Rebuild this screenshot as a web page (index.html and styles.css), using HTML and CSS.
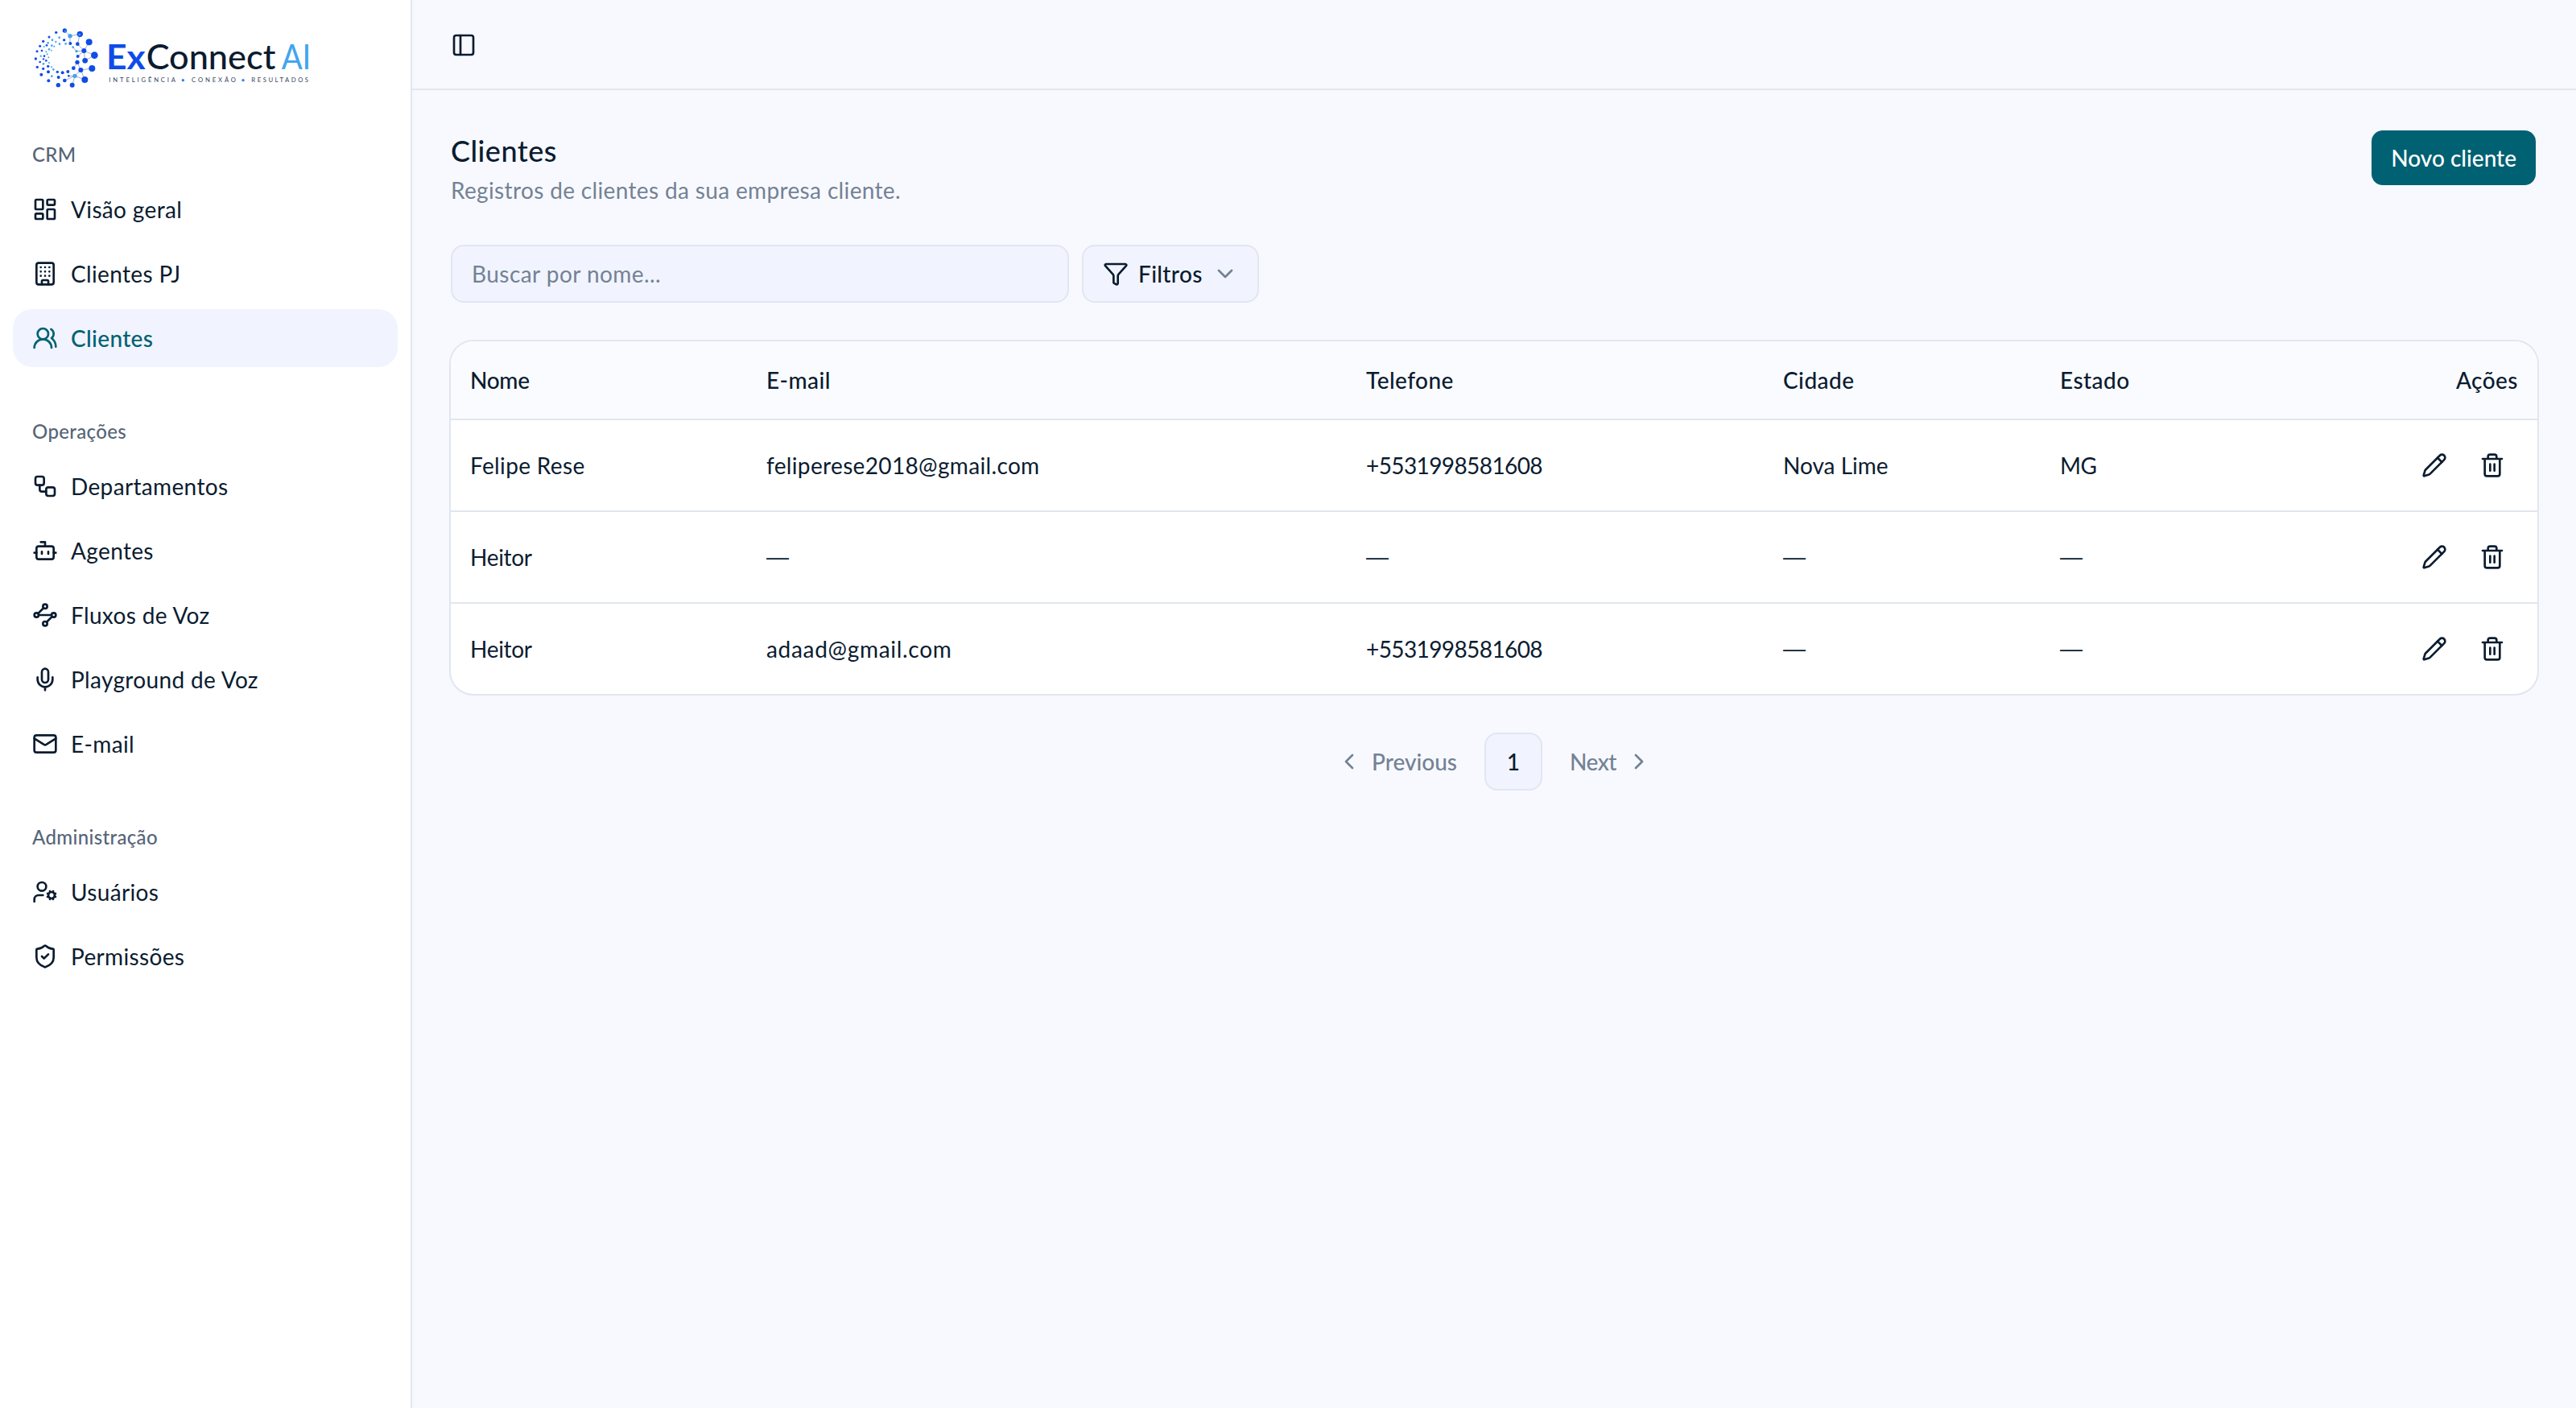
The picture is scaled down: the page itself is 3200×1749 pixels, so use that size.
FILE: index.html
```html
<!DOCTYPE html>
<html lang="pt-BR">
<head>
    <meta charset="UTF-8">
    <meta name="viewport" content="width=device-width, initial-scale=1.0">
    <title>ExConnect AI - Clientes</title>
    <link rel="stylesheet" href="styles.css">
</head>
<body>
    <svg class="sprite">
        <symbol id="pencil" viewBox="0 0 24 24"><path d="M21.174 6.812a1 1 0 0 0-3.986-3.987L3.842 16.174a2 2 0 0 0-.5.83l-1.321 4.352a.5.5 0 0 0 .623.622l4.353-1.32a2 2 0 0 0 .83-.497z"/><path d="m15 5 4 4"/></symbol>
        <symbol id="trash" viewBox="0 0 24 24"><path d="M10 11v6M14 11v6M19 6v14a2 2 0 0 1-2 2H7a2 2 0 0 1-2-2V6M3 6h18M8 6V4a2 2 0 0 1 2-2h4a2 2 0 0 1 2 2v2"/></symbol>
    </svg>

    <aside class="sidebar">
        <a class="logo" href="#">
            <svg viewBox="0 0 1200 360" width="400" height="120">
                <g transform="translate(48 60)">
                    <path class="net" d="M133 24L153 44L190 37L181 74M153 44V72M181 74L205 99L224 67M205 99L244 116L209 136L205 99L177 101L164 86M205 99L182 120M180 142L166 164M180 142L193 171L235 165M193 171L208 207L171 193L193 171M171 193L133 210M171 193L161 227M171 193L148 193"/>
                    <g class="dark">
                        <circle cx="133" cy="24" r="8"/><circle cx="190" cy="37" r="11"/><circle cx="224" cy="67" r="12"/><circle cx="244" cy="116" r="13"/><circle cx="209" cy="136" r="10"/><circle cx="205" cy="99" r="9"/><circle cx="154" cy="72" r="6"/><circle cx="181" cy="74" r="7"/><circle cx="182" cy="120" r="6"/><circle cx="180" cy="142" r="8"/><circle cx="166" cy="164" r="7"/><circle cx="193" cy="171" r="9"/><circle cx="235" cy="165" r="12"/><circle cx="208" cy="207" r="12"/><circle cx="161" cy="227" r="9"/><circle cx="133" cy="210" r="7"/><circle cx="109" cy="227" r="8"/><circle cx="73" cy="211" r="6"/><circle cx="46" cy="188" r="6"/><circle cx="31" cy="160" r="5"/><circle cx="25" cy="129" r="5"/><circle cx="30" cy="101" r="4.5"/><circle cx="41" cy="82" r="4.5"/><circle cx="53" cy="64" r="5"/><circle cx="75" cy="48" r="4.5"/><circle cx="101" cy="31" r="5"/><circle cx="131" cy="59" r="5"/><circle cx="72" cy="178" r="6"/><circle cx="53" cy="166" r="5"/><circle cx="41" cy="141" r="4"/><circle cx="48" cy="99" r="4"/><circle cx="125" cy="181" r="6"/><circle cx="145" cy="177" r="6"/><circle cx="106" cy="178" r="5"/><circle cx="110" cy="198" r="6"/><circle cx="148" cy="193" r="4"/><circle cx="71" cy="157" r="5"/><circle cx="57" cy="119" r="4"/><circle cx="54" cy="130" r="3.5"/><circle cx="66" cy="79" r="4"/><circle cx="64" cy="136" r="4"/>
                    </g>
                    <g class="light">
                        <circle cx="153" cy="44" r="8"/><circle cx="171" cy="193" r="8"/><circle cx="177" cy="101" r="5"/><circle cx="164" cy="86" r="4"/><circle cx="188" cy="39" r="4"/><circle cx="135" cy="26" r="3"/><circle cx="113" cy="50" r="4"/><circle cx="87" cy="59" r="4"/><circle cx="100" cy="66" r="3.5"/><circle cx="114" cy="74" r="4"/><circle cx="137" cy="73" r="4"/><circle cx="71" cy="70" r="4"/><circle cx="85" cy="80" r="4"/><circle cx="94" cy="83" r="3"/><circle cx="56" cy="84" r="3"/><circle cx="64" cy="103" r="3"/><circle cx="75" cy="94" r="4"/><circle cx="68" cy="112" r="3"/><circle cx="44" cy="119" r="3.5"/><circle cx="73" cy="124" r="3"/><circle cx="54" cy="148" r="4"/><circle cx="75" cy="144" r="3"/><circle cx="84" cy="160" r="3"/><circle cx="91" cy="169" r="4"/><circle cx="85" cy="194" r="4"/><circle cx="84" cy="98" r="2.5"/>
                    </g>
                </g>
                <text class="brand brand-ex" x="336" y="227" textLength="146" lengthAdjust="spacingAndGlyphs">Ex</text>
                <text class="brand" x="485" y="227" textLength="482" lengthAdjust="spacingAndGlyphs">Connect</text>
                <text class="brand brand-ai" x="989" y="227" textLength="110" lengthAdjust="spacingAndGlyphs">AI</text>
                <text class="tagline" x="346" y="277" textLength="248">INTELIGÊNCIA</text>
                <text class="tagline" x="654" y="277" textLength="165">CONEXÃO</text>
                <text class="tagline" x="877" y="277" textLength="212">RESULTADOS</text>
                <circle class="sep" cx="622" cy="269" r="5"/>
                <circle class="sep" cx="846" cy="269" r="5"/>
            </svg>
        </a>

        <nav class="group">
            <div class="group-label">CRM</div>
            <a class="item"><svg class="icon" viewBox="0 0 24 24"><rect width="7" height="9" x="3" y="3" rx="1"/><rect width="7" height="5" x="14" y="3" rx="1"/><rect width="7" height="9" x="14" y="12" rx="1"/><rect width="7" height="5" x="3" y="16" rx="1"/></svg><span>Visão geral</span></a>
            <a class="item"><svg class="icon" viewBox="0 0 24 24"><rect width="16" height="20" x="4" y="2" rx="2"/><path d="M9 22v-3a1 1 0 0 1 1-1h4a1 1 0 0 1 1 1v3M8 6h.01M12 6h.01M16 6h.01M8 10h.01M12 10h.01M16 10h.01M8 14h.01M12 14h.01M16 14h.01"/></svg><span>Clientes PJ</span></a>
            <a class="item active"><svg class="icon" viewBox="0 0 24 24"><path d="M18 21a8 8 0 0 0-16 0"/><circle cx="10" cy="8" r="5"/><path d="M22 20c0-3.37-2-6.5-4-8a5 5 0 0 0-.45-8.3"/></svg><span>Clientes</span></a>
        </nav>

        <nav class="group">
            <div class="group-label">Operações</div>
            <a class="item"><svg class="icon" viewBox="0 0 24 24"><rect width="8" height="8" x="3" y="3" rx="2"/><path d="M7 11v4a2 2 0 0 0 2 2h4"/><rect width="8" height="8" x="13" y="13" rx="2"/></svg><span>Departamentos</span></a>
            <a class="item"><svg class="icon" viewBox="0 0 24 24"><path d="M12 8V4H8"/><rect width="16" height="12" x="4" y="8" rx="2"/><path d="M2 14h2M20 14h2M15 13v2M9 13v2"/></svg><span>Agentes</span></a>
            <a class="item"><svg class="icon" viewBox="0 0 24 24"><path d="m10.586 5.414-5.172 5.172M18.586 13.414l-5.172 5.172M6 12h12"/><circle cx="12" cy="20" r="2"/><circle cx="12" cy="4" r="2"/><circle cx="20" cy="12" r="2"/><circle cx="4" cy="12" r="2"/></svg><span>Fluxos de Voz</span></a>
            <a class="item"><svg class="icon" viewBox="0 0 24 24"><path d="M12 19v3M19 10v2a7 7 0 0 1-14 0v-2"/><rect x="9" y="2" width="6" height="13" rx="3"/></svg><span>Playground de Voz</span></a>
            <a class="item"><svg class="icon" viewBox="0 0 24 24"><path d="m22 7-8.991 5.727a2 2 0 0 1-2.009 0L2 7"/><rect x="2" y="4" width="20" height="16" rx="2"/></svg><span>E-mail</span></a>
        </nav>

        <nav class="group">
            <div class="group-label">Administração</div>
            <a class="item"><svg class="icon" viewBox="0 0 24 24"><path d="M10 15H6a4 4 0 0 0-4 4v2M14.305 16.53l.923-.382M15.228 13.852l-.923-.383M16.852 12.228l-.383-.923M16.852 17.772l-.383.924M19.148 12.228l.383-.923M19.53 18.696l-.382-.924M20.772 13.852l.924-.383M20.772 16.148l.924.383"/><circle cx="18" cy="15" r="3"/><circle cx="9" cy="7" r="4"/></svg><span>Usuários</span></a>
            <a class="item"><svg class="icon" viewBox="0 0 24 24"><path d="M20 13c0 5-3.5 7.5-7.66 8.95a1 1 0 0 1-.67-.01C7.5 20.5 4 18 4 13V6a1 1 0 0 1 1-1c2 0 4.5-1.2 6.24-2.72a1.17 1.17 0 0 1 1.52 0C14.51 3.81 17 5 19 5a1 1 0 0 1 1 1z"/><path d="m9 12 2 2 4-4"/></svg><span>Permissões</span></a>
        </nav>
    </aside>

    <div class="content">
        <header class="topbar">
            <svg class="icon" viewBox="0 0 24 24"><rect width="18" height="18" x="3" y="3" rx="2"/><path d="M9 3v18"/></svg>
        </header>

        <main class="main">
            <div class="page-head">
                <div>
                    <h1>Clientes</h1>
                    <p class="subtitle">Registros de clientes da sua empresa cliente.</p>
                </div>
                <button class="btn-primary">Novo cliente</button>
            </div>

            <div class="filters">
                <input class="search" type="text" placeholder="Buscar por nome...">
                <button class="btn-filter">
                    <svg class="icon" viewBox="0 0 24 24"><path d="M10 20a1 1 0 0 0 .553.895l2 1A1 1 0 0 0 14 21v-7a2 2 0 0 1 .517-1.341L21.74 4.67A1 1 0 0 0 21 3H3a1 1 0 0 0-.742 1.67l7.225 7.989A2 2 0 0 1 10 14z"/></svg>
                    <span>Filtros</span>
                    <svg class="icon muted" viewBox="0 0 24 24"><path d="m6 9 6 6 6-6"/></svg>
                </button>
            </div>

            <div class="card">
                <table>
                    <colgroup>
                        <col class="c-nome"><col class="c-email"><col class="c-fone"><col class="c-cidade"><col class="c-estado"><col>
                    </colgroup>
                    <thead>
                        <tr><th class="name">Nome</th><th>E-mail</th><th>Telefone</th><th>Cidade</th><th>Estado</th><th class="right">Ações</th></tr>
                    </thead>
                    <tbody>
                        <tr>
                            <td>Felipe Rese</td><td>feliperese2018@gmail.com</td><td class="num">+5531998581608</td><td class="city">Nova Lime</td><td class="num">MG</td>
                            <td><div class="actions"><button><svg class="icon"><use href="#pencil"/></svg></button><button><svg class="icon"><use href="#trash"/></svg></button></div></td>
                        </tr>
                        <tr>
                            <td class="name">Heitor</td><td class="dash">—</td><td class="dash">—</td><td class="dash">—</td><td class="dash">—</td>
                            <td><div class="actions"><button><svg class="icon"><use href="#pencil"/></svg></button><button><svg class="icon"><use href="#trash"/></svg></button></div></td>
                        </tr>
                        <tr>
                            <td class="name">Heitor</td><td class="mail">adaad@gmail.com</td><td class="num">+5531998581608</td><td class="dash">—</td><td class="dash">—</td>
                            <td><div class="actions"><button><svg class="icon"><use href="#pencil"/></svg></button><button><svg class="icon"><use href="#trash"/></svg></button></div></td>
                        </tr>
                    </tbody>
                </table>
            </div>

            <div class="pagination">
                <button class="page-nav prev"><svg class="icon" viewBox="0 0 24 24"><path d="m15 18-6-6 6-6"/></svg><span>Previous</span></button>
                <button class="page-current">1</button>
                <button class="page-nav next"><span>Next</span><svg class="icon" viewBox="0 0 24 24"><path d="m9 18 6-6-6-6"/></svg></button>
            </div>
        </main>
    </div>
</body>
</html>
```
FILE: styles.css
```css
* {
    box-sizing: border-box;
}
body {
    margin: 0;
    min-height: 100vh;
    display: flex;
    background: #f8f9ff;
    color: #0b1c30;
    font-family: Lato, "Open Sans", sans-serif;
    font-size: 28px;
    line-height: 40px;
    letter-spacing: 0.35px;
}
button,
input {
    margin: 0;
    font: inherit;
    color: inherit;
    letter-spacing: inherit;
}
button {
    border: 2px solid transparent;
    background: none;
}
.sprite {
    display: none;
}
.icon {
    flex: none;
    width: 32px;
    height: 32px;
    fill: none;
    stroke: currentColor;
    stroke-width: 2;
    stroke-linecap: round;
    stroke-linejoin: round;
}
.muted {
    color: #738295;
}

/* sidebar */
.sidebar {
    flex: none;
    width: 512px;
    background: #fff;
    border-right: 2px solid #e1e6ef;
}
.logo {
    display: block;
    height: 144px;
    padding: 10px 0 0 20px;
}
.logo svg {
    display: block;
}
.net {
    fill: none;
    stroke: #8ba0bb;
    stroke-width: 2.5;
}
.dark {
    fill: #0f4ce8;
}
.light {
    fill: #41a5ee;
}
.brand {
    font-family: Lato, sans-serif;
    font-size: 126px;
    font-weight: 500;
    letter-spacing: 0;
    fill: #0b1c30;
}
.brand-ex {
    font-weight: 700;
    fill: #0f4ce8;
}
.brand-ai {
    font-weight: 400;
    fill: #41a5ee;
}
.tagline {
    font-size: 23px;
    letter-spacing: 0;
    fill: #33435a;
}
.sep {
    fill: #2b7de9;
}
.group {
    display: flex;
    flex-direction: column;
    gap: 8px;
    margin-bottom: 16px;
    padding: 16px;
}
.group-label {
    height: 64px;
    margin-bottom: -8px;
    padding: 0 24px;
    font-size: 24px;
    font-weight: 500;
    line-height: 64px;
    color: #566578;
}
.item {
    display: flex;
    align-items: center;
    gap: 16px;
    height: 72px;
    padding: 0 24px;
    border-radius: 24px;
}
.item.active {
    background: #f1f4fe;
    color: #006172;
    font-weight: 500;
}

/* content */
.content {
    flex: 1;
    min-width: 0;
}
.topbar {
    display: flex;
    align-items: center;
    height: 112px;
    padding: 2px 48px 0;
    border-bottom: 2px solid #e1e6ef;
}
.main {
    padding: 48px;
}
.page-head {
    display: flex;
    justify-content: space-between;
    align-items: flex-start;
    height: 144px;
}
h1 {
    margin: 0 0 2px;
    font-size: 36px;
    font-weight: 500;
    line-height: 54px;
    letter-spacing: 0.5px;
}
.subtitle {
    margin: 0;
    color: #738295;
}
.btn-primary {
    height: 68px;
    margin: 2px 2px 0 0;
    padding: 0 22px;
    border-radius: 14px;
    background: #006172;
    color: #fff;
    font-weight: 500;
    letter-spacing: 0;
}
.filters {
    display: flex;
    gap: 16px;
    margin-bottom: 48px;
}
.search,
.btn-filter,
.page-current {
    height: 72px;
    border: 2px solid #e1e6ef;
    border-radius: 16px;
    background: #f1f4fe;
}
.search {
    width: 768px;
    padding: 0 24px;
    letter-spacing: 0.45px;
}
.search::placeholder {
    color: #738295;
}
.btn-filter {
    display: flex;
    align-items: center;
    gap: 12px;
    width: 220px;
    padding: 0 24px;
    font-weight: 500;
}
.btn-filter span {
    flex: 1;
    text-align: left;
}

/* table */
.card {
    overflow: hidden;
    border-radius: 28px;
    background: #fff;
    box-shadow: 0 0 0 2px #e1e6ef;
}
table {
    width: 100%;
    table-layout: fixed;
    border-collapse: separate;
    border-spacing: 0;
}
.c-nome {
    width: 368px;
}
.c-email {
    width: 745px;
}
.c-fone {
    width: 518px;
}
.c-cidade {
    width: 344px;
}
.c-estado {
    width: 345px;
}
th {
    height: 98px;
    padding: 0 24px;
    border-bottom: 2px solid #e1e6ef;
    background: #fafbff;
    font-weight: 500;
    letter-spacing: 0.45px;
    text-align: left;
}
th.right {
    text-align: right;
}
td {
    height: 114px;
    padding: 0 24px;
    border-bottom: 2px solid #e1e6ef;
}
tr:last-child td {
    height: 112px;
    border-bottom: 0;
}
.num {
    letter-spacing: -0.6px;
}
.city {
    letter-spacing: 0;
}
.name {
    letter-spacing: -0.3px;
}
.mail {
    letter-spacing: 0.7px;
}
.dash {
    font-family: "Liberation Sans", sans-serif;
}
.actions {
    display: flex;
    justify-content: flex-end;
    gap: 8px;
}
.actions button {
    display: flex;
    align-items: center;
    justify-content: center;
    width: 64px;
    height: 64px;
    padding: 0;
}

/* pagination */
.pagination {
    display: flex;
    justify-content: center;
    gap: 8px;
    margin-top: 48px;
}
.page-nav {
    display: flex;
    align-items: center;
    gap: 12px;
    height: 72px;
    padding: 0 24px;
    color: #738295;
    font-weight: 500;
}
.prev {
    width: 202px;
    letter-spacing: 0;
}
.next {
    width: 154px;
    justify-content: space-between;
    letter-spacing: -0.5px;
}
.page-current {
    width: 72px;
    padding: 0;
    font-weight: 500;
}
```
